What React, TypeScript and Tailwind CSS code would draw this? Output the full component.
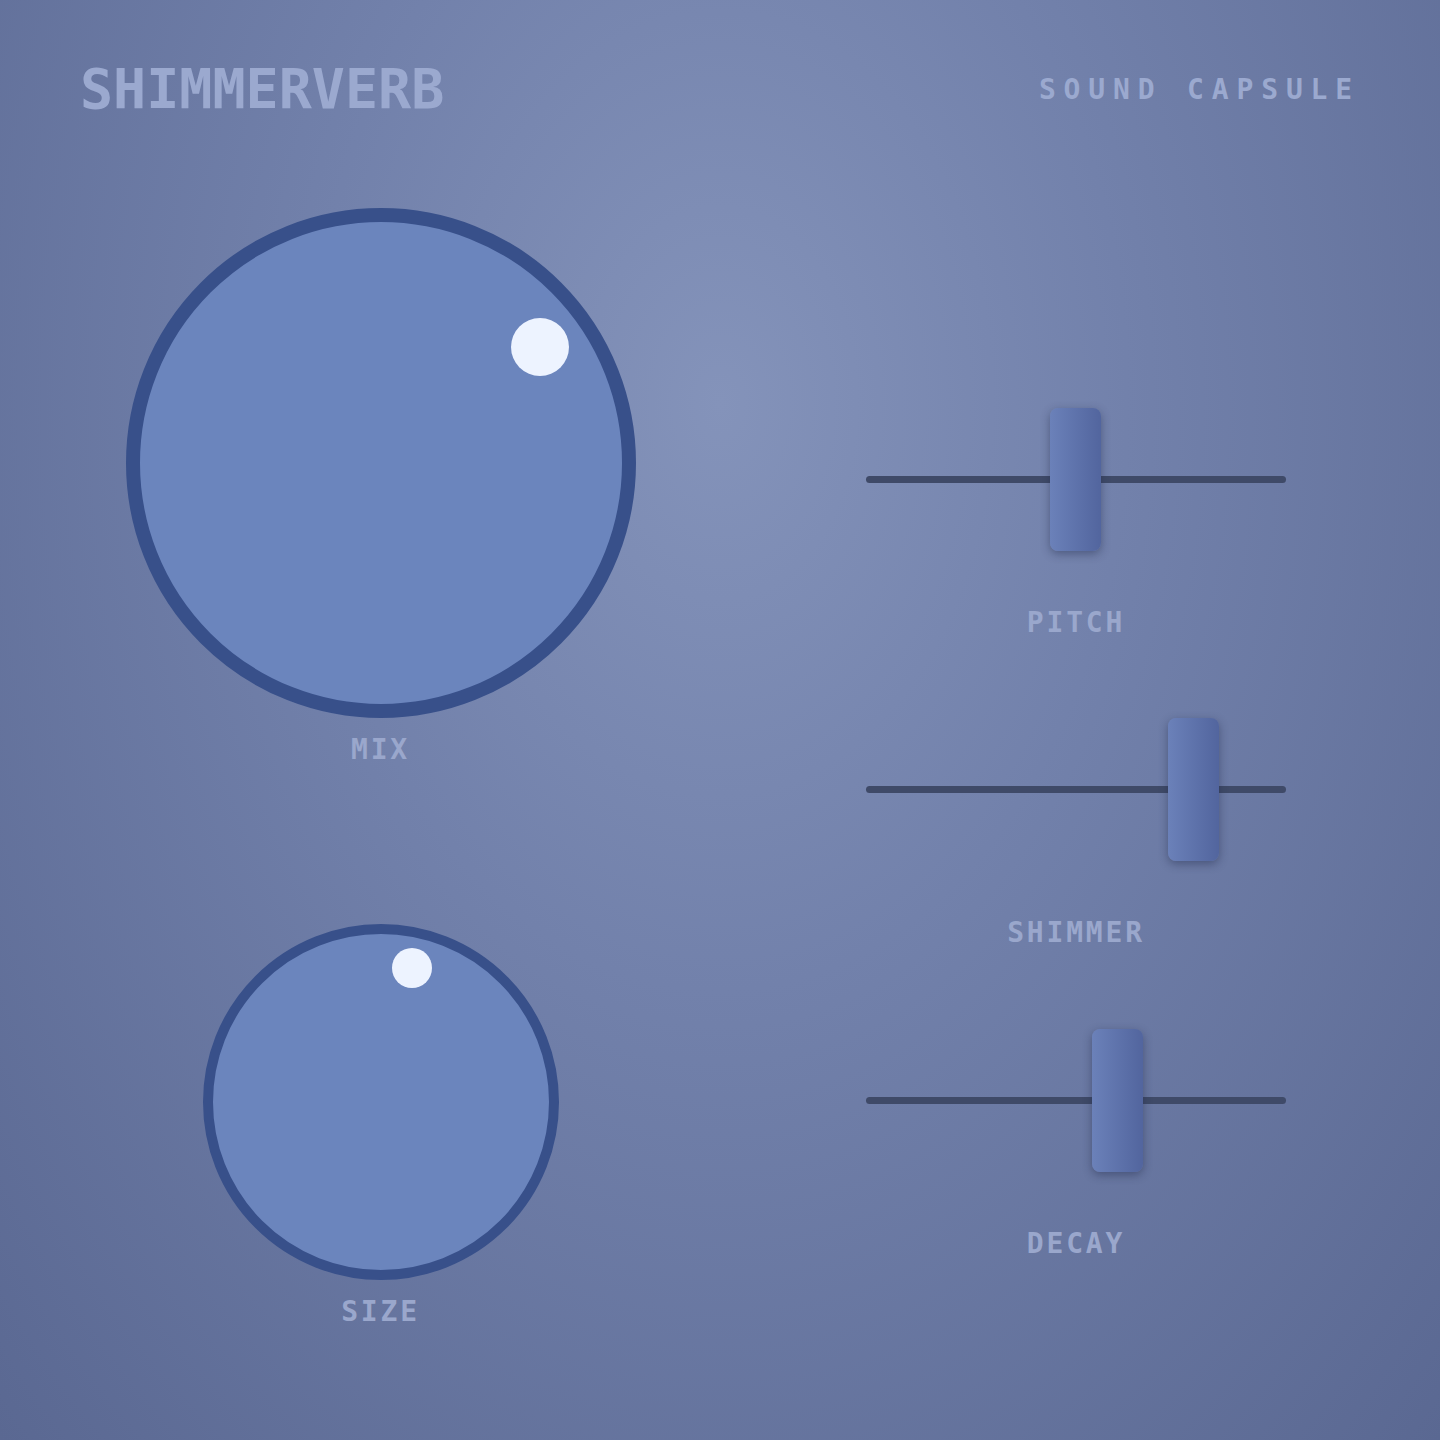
import React from 'react';

const mono = { fontFamily: '"DejaVu Sans Mono", "Liberation Mono", monospace' };

interface KnobProps {
  label: string;
  size: 'lg' | 'sm';
}

function Knob({ label, size }: KnobProps) {
  const big = size === 'lg';
  return (
    <div className="flex flex-col items-center">
      <div
        className={
          big
            ? 'relative w-[510px] h-[510px] rounded-full bg-[#6b85bd] border-[14px] border-[#38508a]'
            : 'relative w-[356px] h-[356px] rounded-full bg-[#6b85bd] border-[10px] border-[#38508a]'
        }
      >
        <div
          className={
            big
              ? 'absolute left-[371px] top-[96px] w-[58px] h-[58px] rounded-full bg-[#edf3ff]'
              : 'absolute left-[179px] top-[14px] w-[40px] h-[40px] rounded-full bg-[#edf3ff]'
          }
        />
      </div>
      <span className="mt-[18px] text-[28px] leading-none font-bold tracking-[0.1em] text-[#9aa7cc]" style={mono}>
        {label}
      </span>
    </div>
  );
}

interface SliderProps {
  label: string;
  left: number;
}

function Slider({ label, left }: SliderProps) {
  return (
    <div className="flex flex-col items-center w-[420px]">
      <div className="relative w-full h-[143px] flex items-center">
        <div className="w-full h-[7px] rounded-full bg-[#3f4a68]" />
        <div
          className="absolute top-0 w-[51px] h-[143px] rounded-[8px] bg-gradient-to-r from-[#6b81b9] to-[#52659e] shadow-[0_3px_10px_rgba(30,40,70,0.45)]"
          style={{ left }}
        />
      </div>
      <span className="mt-[58px] text-[28px] leading-none font-bold tracking-[0.1em] text-[#9aa7cc]" style={mono}>
        {label}
      </span>
    </div>
  );
}

export default function App() {
  return (
    <div className="w-[1440px] h-[1440px] overflow-hidden bg-[radial-gradient(ellipse_at_50%_28%,#8493ba_0%,#7281ab_40%,#5a6892_100%)]">
      <div className="px-[80px] pt-[62px]">
        <header className="flex items-center justify-between">
          <h1 className="text-[55px] leading-none font-bold text-[#9ba9cf]" style={mono}>
            SHIMMERVERB
          </h1>
          <span className="text-[28px] leading-none font-bold tracking-[0.28em] text-[#9ba9cf]" style={mono}>
            SOUND CAPSULE
          </span>
        </header>

        <div className="flex items-start">
          <div className="w-[601px] pt-[91px] flex flex-col items-center gap-[160px]">
            <Knob label="MIX" size="lg" />
            <Knob label="SIZE" size="sm" />
          </div>
          <div className="ml-[185px] pt-[291px] flex flex-col gap-[81px]">
            <Slider label="PITCH" left={184} />
            <Slider label="SHIMMER" left={302} />
            <div className="mt-[1px]">
              <Slider label="DECAY" left={226} />
            </div>
          </div>
        </div>
      </div>
    </div>
  );
}
